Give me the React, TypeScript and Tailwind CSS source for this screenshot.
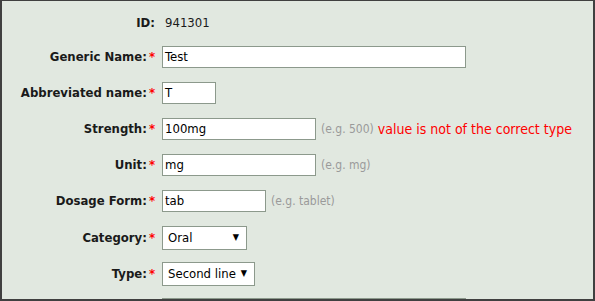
import React from "react";

const font = { fontFamily: '"DejaVu Sans Condensed", "DejaVu Sans", Tahoma, sans-serif' };

function Label({ text, required = true }: { text: string; required?: boolean }) {
	return (
		<div className="flex h-[22px] w-[153px] shrink-0 items-center justify-end text-[13px] font-bold text-[#1a1a1a]">
			{text}
			{required && <span className="ml-[2px] text-[#ff0000]">*</span>}
		</div>
	);
}

function TextInput({ value, width }: { value: string; width: string }) {
	return (
		<div className={`flex h-[22px] items-center border border-[#8c998c] bg-white px-[2px] text-[13px] text-black ${width}`}>
			{value}
		</div>
	);
}

function Hint({ text }: { text: string }) {
	return <span className="ml-[5px] text-[12px] text-[#9a9a9a]">{text}</span>;
}

function Select({ value, width }: { value: string; width: string }) {
	return (
		<div className={`flex h-[24px] items-center justify-between border border-[#8c998c] bg-white pl-[5px] pr-[7px] text-[13px] text-black ${width}`}>
			<span>{value}</span>
			<span className="text-[9px]">▼</span>
		</div>
	);
}

export default function App() {
	return (
		<div style={font} className="h-[301px] w-[595px] overflow-hidden border-t border-l-2 border-r-2 border-b-2 border-[#404040] bg-[#e1e8e0]">
			<div className="flex flex-col pt-[9px]">
				<div className="flex h-[36px] items-start pt-[4px]">
					<div className="flex h-[18px] w-[153px] items-center justify-end text-[13px] font-bold text-[#1a1a1a]">ID:</div>
					<div className="ml-[10px] flex h-[18px] items-center text-[13px] text-[#1a1a1a]">941301</div>
				</div>
				<div className="flex h-[36px] items-start gap-[7px]">
					<Label text="Generic Name:" />
					<TextInput value="Test" width="w-[304px]" />
				</div>
				<div className="flex h-[36px] items-start gap-[7px]">
					<Label text="Abbreviated name:" />
					<TextInput value="T" width="w-[54px]" />
				</div>
				<div className="flex h-[36px] items-start gap-[7px]">
					<Label text="Strength:" />
					<div className="flex h-[22px] items-center">
						<TextInput value="100mg" width="w-[154px]" />
						<Hint text="(e.g. 500)" />
						<span className="ml-[4px] text-[14px] text-[#ff0000]">value is not of the correct type</span>
					</div>
				</div>
				<div className="flex h-[36px] items-start gap-[7px]">
					<Label text="Unit:" />
					<div className="flex h-[22px] items-center">
						<TextInput value="mg" width="w-[154px]" />
						<Hint text="(e.g. mg)" />
					</div>
				</div>
				<div className="flex h-[36px] items-start gap-[7px]">
					<Label text="Dosage Form:" />
					<div className="flex h-[22px] items-center">
						<TextInput value="tab" width="w-[104px]" />
						<Hint text="(e.g. tablet)" />
					</div>
				</div>
				<div className="flex h-[36px] items-start gap-[7px]">
					<div className="flex h-[24px] items-center">
						<Label text="Category:" />
					</div>
					<Select value="Oral" width="w-[85px]" />
				</div>
				<div className="flex h-[36px] items-start gap-[7px]">
					<div className="flex h-[24px] items-center">
						<Label text="Type:" />
					</div>
					<Select value="Second line" width="w-[93px]" />
				</div>
				<div className="flex items-start gap-[7px]">
					<div className="w-[153px] shrink-0" />
					<div className="h-[60px] w-[304px] border border-[#8c998c] bg-white" />
				</div>
			</div>
		</div>
	);
}
